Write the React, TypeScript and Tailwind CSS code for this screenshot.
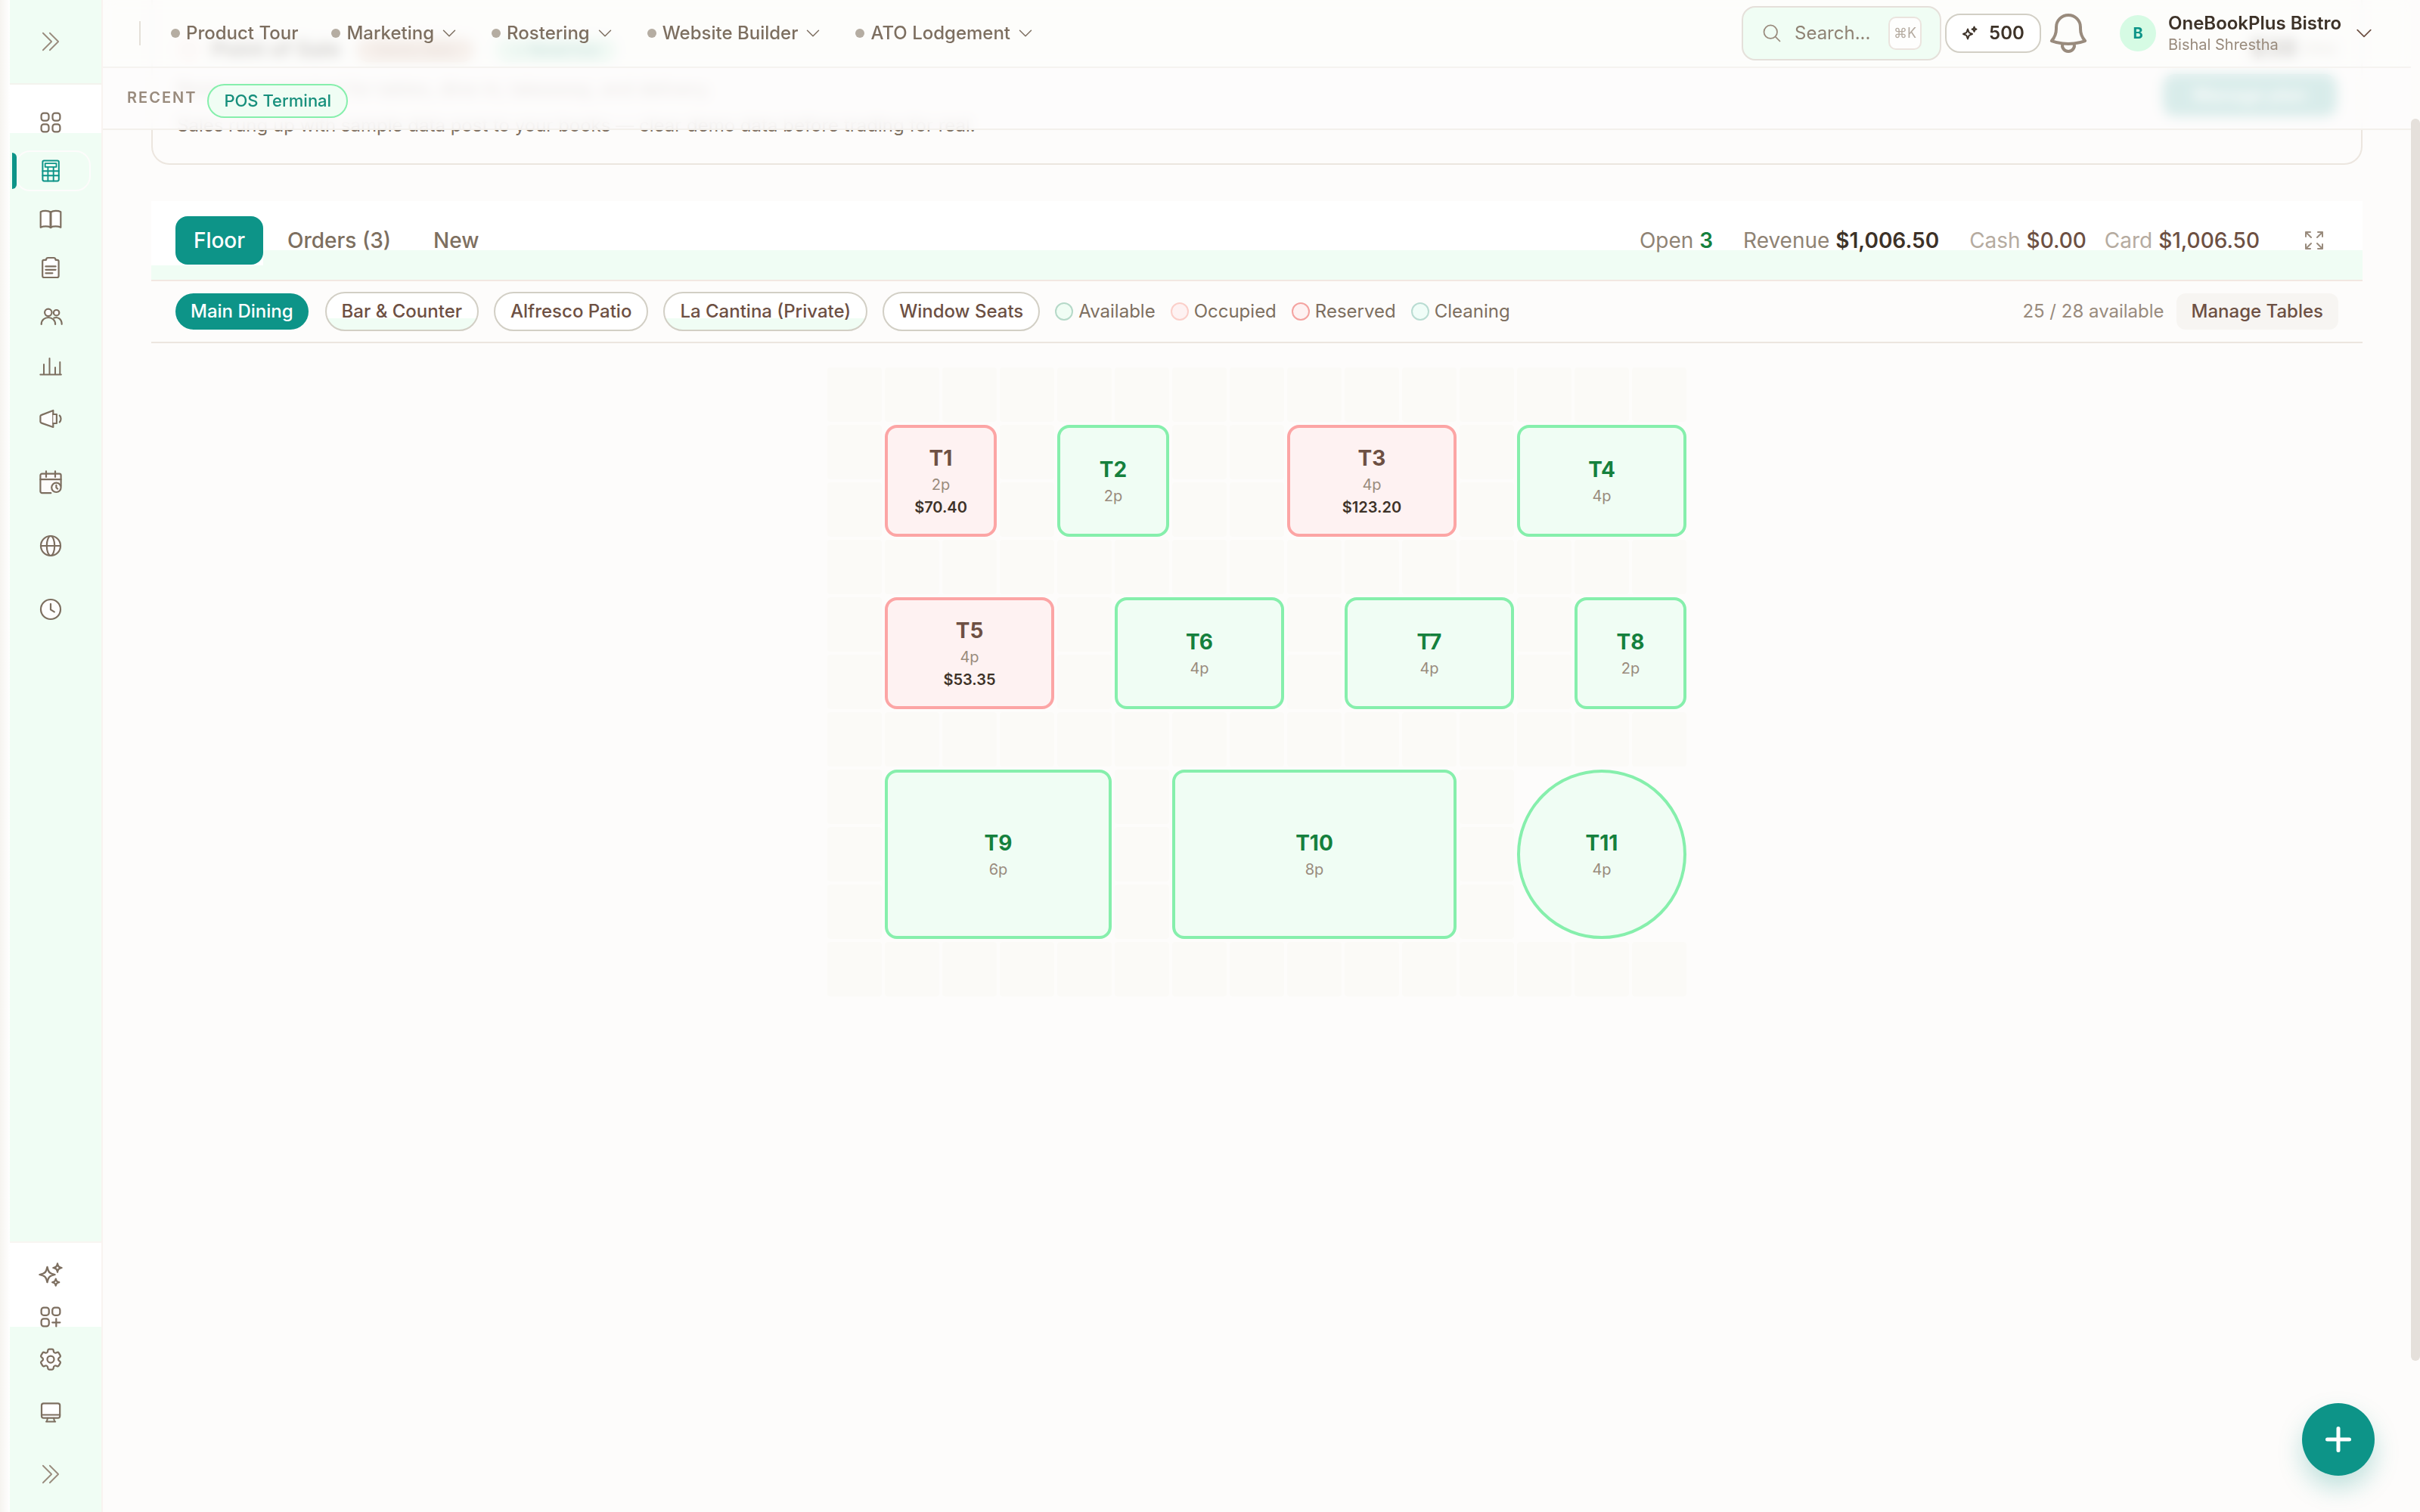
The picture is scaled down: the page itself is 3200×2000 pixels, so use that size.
import type { ReactNode } from 'react';
import {
  HiOutlineArrowsPointingOut,
  HiOutlineBell,
  HiOutlineChevronDoubleRight,
  HiOutlineChevronDown,
  HiOutlineCog6Tooth,
  HiOutlineMagnifyingGlass,
  HiOutlineSparkles,
  HiOutlineSquaresPlus,
} from 'react-icons/hi2';

type TableStatus = 'available' | 'occupied';

interface FloorTable {
  name: string;
  seats: number;
  col: number;
  row: number;
  w: number;
  h: number;
  status: TableStatus;
  total?: string;
  round?: boolean;
}

const COLS = 15;
const ROWS = 11;

const tables: FloorTable[] = [
  { name: 'T1', seats: 2, col: 1, row: 1, w: 2, h: 2, status: 'occupied', total: '$70.40' },
  { name: 'T2', seats: 2, col: 4, row: 1, w: 2, h: 2, status: 'available' },
  { name: 'T3', seats: 4, col: 8, row: 1, w: 3, h: 2, status: 'occupied', total: '$123.20' },
  { name: 'T4', seats: 4, col: 12, row: 1, w: 3, h: 2, status: 'available' },
  { name: 'T5', seats: 4, col: 1, row: 4, w: 3, h: 2, status: 'occupied', total: '$53.35' },
  { name: 'T6', seats: 4, col: 5, row: 4, w: 3, h: 2, status: 'available' },
  { name: 'T7', seats: 4, col: 9, row: 4, w: 3, h: 2, status: 'available' },
  { name: 'T8', seats: 2, col: 13, row: 4, w: 2, h: 2, status: 'available' },
  { name: 'T9', seats: 6, col: 1, row: 7, w: 4, h: 3, status: 'available' },
  { name: 'T10', seats: 8, col: 6, row: 7, w: 5, h: 3, status: 'available' },
  { name: 'T11', seats: 4, col: 12, row: 7, w: 3, h: 3, status: 'available', round: true },
];

const menuItems = [
  { label: 'Product Tour', menu: false },
  { label: 'Marketing', menu: true },
  { label: 'Rostering', menu: true },
  { label: 'Website Builder', menu: true },
  { label: 'ATO Lodgement', menu: true },
];

const areas = [
  { label: 'Bar & Counter', tinted: true },
  { label: 'Alfresco Patio', tinted: false },
  { label: 'La Cantina (Private)', tinted: true },
  { label: 'Window Seats', tinted: false },
];

const legend = [
  { label: 'Available', dot: 'bg-[#f0fdf4] border-[#b5d9c8]' },
  { label: 'Occupied', dot: 'bg-[#fef2f2] border-[#fbcfc9]' },
  { label: 'Reserved', dot: 'bg-[#fef2f2] border-[#f4a3a0]' },
  { label: 'Cleaning', dot: 'bg-[#f0fdf8] border-[#b9dcd2]' },
];

function Icon({ children, className = '' }: { children: ReactNode; className?: string }) {
  return (
    <svg
      viewBox="0 0 36 36"
      className={`size-9 ${className}`}
      fill="none"
      stroke="currentColor"
      strokeWidth="2.2"
      strokeLinecap="round"
      strokeLinejoin="round"
    >
      {children}
    </svg>
  );
}

const navIcons: { id: string; space: string; active?: boolean; icon: ReactNode }[] = [
  {
    id: 'dashboard',
    space: '',
    icon: (
      <Icon>
        <rect x="5.6" y="5.6" width="9.9" height="10" rx="3.3" />
        <rect x="20.5" y="5.6" width="9.9" height="10" rx="3.3" />
        <rect x="5.6" y="20.4" width="9.9" height="10" rx="3.3" />
        <rect x="20.5" y="20.4" width="9.9" height="10" rx="3.3" />
      </Icon>
    ),
  },
  {
    id: 'pos',
    space: '',
    active: true,
    icon: (
      <Icon>
        <rect x="7.4" y="4.4" width="21.4" height="27" rx="1.8" strokeWidth="2" />
        <rect x="10.7" y="8.2" width="14.8" height="4.6" strokeWidth="1.8" />
        <path d="M7.4 18.2h21.4M7.4 24.3h21.4M14.4 13v18.4M21.7 13v18.4" strokeWidth="1.9" />
      </Icon>
    ),
  },
  {
    id: 'books',
    space: '',
    icon: (
      <Icon>
        <path
          d="M18 8.6C14.6 6.4 8.4 6.4 4.7 8.2v20.6c3.7-1.8 9.9-1.8 13.3 0 3.4-1.8 9.6-1.8 13.3 0V8.2C27.6 6.4 21.4 6.4 18 8.6Z"
          fill="#fff"
        />
        <path d="M18 8.6v20.2" strokeWidth="3" />
      </Icon>
    ),
  },
  {
    id: 'orders',
    space: '',
    icon: (
      <Icon>
        <path
          d="M12 7.8H9.2A2 2 0 0 0 7.2 9.8V29A2 2 0 0 0 9.2 31H26.6A2 2 0 0 0 28.6 29V9.8A2 2 0 0 0 26.6 7.8H24.5C24.5 6 23.6 5 22 5H14.5C13 5 12 6 12 7.8Z"
          fill="#fff"
        />
        <path d="M11.4 16.4h13.2M11.4 20.8h13.2M11.4 25.3h9" />
      </Icon>
    ),
  },
  {
    id: 'staff',
    space: 'mt-px',
    icon: (
      <Icon>
        <circle cx="25.6" cy="12.7" r="3.7" fill="#fff" />
        <path d="M22.4 19.6c5-2 10.3 1.4 10.3 8.2" />
        <circle cx="14.8" cy="12.3" r="4.7" fill="#fff" />
        <path d="M5.7 28c0-12 18.4-12 18.4 0" />
      </Icon>
    ),
  },
  {
    id: 'reports',
    space: 'mt-0.5',
    icon: (
      <Icon>
        <path d="M4.3 28.6h27.6M9 28.3V15M16.5 28.3V7M24 28.3V19M30.3 28.3V12" strokeWidth="2" />
      </Icon>
    ),
  },
  {
    id: 'campaigns',
    space: 'mt-[5px]',
    icon: (
      <Icon>
        <path d="M4.4 14.6C4.4 13.6 5 13.2 6 12.9L21.3 7v22L6 23.6c-1-.3-1.6-.8-1.6-1.8Z" fill="#fefefd" />
        <path d="M21.3 12h4.6v12h-4.6" fill="#fefefd" />
        <path d="M29.8 13.6c2.3 2.2 2.3 6.6 0 8.8" />
      </Icon>
    ),
  },
  {
    id: 'roster',
    space: 'mt-5',
    icon: (
      <Icon>
        <path
          d="M18.3 32.2H6.6a2.2 2.2 0 0 1-2.2-2.2V8.8a2.2 2.2 0 0 1 2.2-2.2h22.8a2.2 2.2 0 0 1 2.2 2.2V23"
          fill="#fdfcfb"
        />
        <path d="M4.4 14.2h27.2M12 3.3v7.6M24 3.3v7.6" />
        <circle cx="25.4" cy="24.8" r="6.2" fill="#fdfcfb" />
        <path d="M25.4 21.8v3.2l1.8 1.6" />
      </Icon>
    ),
  },
  {
    id: 'website',
    space: 'mt-5',
    icon: (
      <Icon>
        <circle cx="18" cy="18" r="13" fill="#fefefd" />
        <ellipse cx="18" cy="18" rx="5.2" ry="13" />
        <path d="M5 18h26" />
      </Icon>
    ),
  },
  {
    id: 'timesheets',
    space: 'mt-5',
    icon: (
      <Icon>
        <circle cx="18" cy="18" r="13" fill="#fefefd" />
        <path d="M18 10.8V18.4L22.8 21.4" />
      </Icon>
    ),
  },
];

function Sidebar() {
  return (
    <aside className="relative z-10 flex w-[136px] shrink-0 flex-col border-r-2 border-[#f9f3f0] text-[#7d6f60]">
      <div className="flex h-28 items-center justify-center border-b-2 border-[#f3f3ee] bg-[#f0fdf4] text-[#998b7d]">
        <HiOutlineChevronDoubleRight className="size-9" strokeWidth={1.2} />
      </div>
      <nav className="flex flex-1 flex-col bg-[linear-gradient(#fff_64px,#f0fdf4_64px)] pt-[18px]">
        {navIcons.map((item) => (
          <div
            key={item.id}
            className={`relative flex h-16 items-center justify-center ${item.space} ${item.active ? 'text-[#0d9488]' : ''}`}
          >
            {item.active && (
              <>
                <span className="absolute left-5 top-[5px] h-[54px] w-[100px] rounded-[20px] border-2 border-[#fdfcfb]" />
                <span className="absolute left-4 top-2 z-10 h-12 w-1.5 rounded-r-md bg-[#0d9488]" />
              </>
            )}
            {item.icon}
          </div>
        ))}
      </nav>
      <div className="flex h-[358px] flex-col border-t-2 border-[#f8f5f1] bg-[linear-gradient(#fff_111px,#f0fdf4_111px)] pt-3.5">
        <div className="flex h-14 items-center justify-center">
          <HiOutlineSparkles className="size-9" />
        </div>
        <div className="flex h-14 items-center justify-center">
          <HiOutlineSquaresPlus className="size-9" />
        </div>
        <div className="flex h-14 items-center justify-center">
          <HiOutlineCog6Tooth className="size-9" fill="#fefefd" />
        </div>
        <div className="mt-3.5 flex h-14 items-center justify-center">
          <Icon>
            <rect x="6" y="6.4" width="24.2" height="19.2" rx="2.6" fill="#fff" />
            <path d="M6 21.4h24.2" strokeWidth="2" />
            <path d="M14 25.8l-1.2 4.6h10.4l-1.2-4.6M12 30.6h12.2" strokeWidth="2" />
          </Icon>
        </div>
        <div className="mt-[26px] flex h-14 items-center justify-center text-[#998b7d]">
          <HiOutlineChevronDoubleRight className="size-9" strokeWidth={1.2} />
        </div>
      </div>
      <div className="absolute inset-y-0 left-0 w-[13px] bg-linear-to-r from-[#f6f4f0] to-white" />
    </aside>
  );
}

function TopBar() {
  return (
    <header className="flex h-[90px] items-center border-b-2 border-[#f5f3f0] bg-[#fdfcfb]/80 pl-12 backdrop-blur-sm">
      <div className="h-8 w-0.5 bg-[#e5e0d9]" />
      <nav className="ml-10 flex items-center gap-11 text-2xl font-medium text-[#7d6f60]">
        {menuItems.map((item) => (
          <div key={item.label} className="flex items-center">
            <span className="mr-2 size-3 rounded-full bg-[#b5ada2]" />
            {item.label}
            {item.menu && <HiOutlineChevronDown className="ml-2 size-6" />}
          </div>
        ))}
      </nav>
      <div className="ml-auto flex items-center">
        <div className="flex h-[72px] w-[264px] items-center rounded-[18px] border-2 border-[#e5e0da] bg-[#f0fdf4] pl-6 pr-6">
          <HiOutlineMagnifyingGlass className="size-7 text-[#998b7d]" />
          <span className="ml-4 text-2xl text-[#8f8374]">Search...</span>
          <kbd className="ml-auto flex size-11 items-center justify-center rounded-[10px] border-2 border-[#ebe4de] bg-[#fefefd] font-[Inter] text-lg text-[#b5aba0]">
            ⌘K
          </kbd>
        </div>
        <button className="ml-[5px] flex h-[52px] w-[127px] items-center justify-center gap-3.5 rounded-[20px] border-2 border-[#d2cfc5] bg-white text-2xl font-semibold text-[#3d3228]">
          <svg viewBox="0 0 22 22" className="size-[22px]" fill="none" stroke="currentColor" strokeWidth="2" strokeLinejoin="round">
            <path d="M8 5.5l1.7 4.6L14 12l-4.3 1.9L8 18.5l-1.7-4.6L2 12l4.3-1.9Z" />
            <path d="M16.5 2.5l.9 2.3 2.1.9-2.1.9-.9 2.3-.9-2.3-2.1-.9 2.1-.9Z" />
          </svg>
          500
        </button>
        <HiOutlineBell className="ml-1 size-16 text-[#998b7d]" />
        <div className="ml-9 flex size-12 items-center justify-center rounded-full bg-[#d6fbe4] text-xl font-bold text-[#0d9488]">
          B
        </div>
        <div className="ml-4 w-[230px]">
          <div className="text-2xl leading-[30px] font-semibold text-[#3d3228]">OneBookPlus Bistro</div>
          <div className="text-xl leading-[26px] text-[#998b7d]">Bishal Shrestha</div>
        </div>
        <HiOutlineChevronDown className="ml-[15px] mr-12 size-7 text-[#6d5043]" />
      </div>
    </header>
  );
}

function RecentBar() {
  return (
    <div className="flex h-[82px] items-center border-b-2 border-[#f3f0ec] bg-[#fdfcfb]/85 pl-8 backdrop-blur-sm">
      <span className="-mt-0.5 text-xl font-semibold tracking-[2px] text-[#998b7d]">RECENT</span>
      <span className="ml-3.5 mt-1.5 flex h-[45px] items-center rounded-full border-2 border-[#86efac] bg-[#f0fdf4] px-5 text-[22px] font-medium text-[#178f7c]">
        POS Terminal
      </span>
    </div>
  );
}

function IntroCard() {
  return (
    <section className="flex h-[218px] justify-between rounded-b-3xl border-2 border-t-0 border-[#ece6df] px-8 pt-[44px]">
      <div className="flex flex-col text-2xl text-[#7d6f60]">
        <div className="flex h-11 items-center">
          <span className="size-8 rounded-full bg-[#fbe6e6]" />
          <span className="ml-3.5 text-[28px] font-bold text-[#2b2118]">Point of Sale</span>
          <span className="ml-5 flex h-8 w-[156px] items-center justify-center rounded-full bg-[#dcbcab] text-xl text-[#8a5c4a]">
            Demo data
          </span>
          <span className="ml-7 flex h-8 w-[160px] items-center justify-center rounded-full bg-[#c0ecd6] text-xl font-semibold text-[#0d7a70]">
            ✓ Retail live
          </span>
        </div>
        <p className="mt-3 h-9 leading-9">Restaurant terminal for tables, dine-in, takeaway, and delivery.</p>
        <p className="mt-3 h-9 leading-9">
          Sales rung up with sample data post to your books — clear demo data before trading for real.
        </p>
      </div>
      <div className="flex flex-col items-end pt-0.5">
        <div className="flex h-9 items-center gap-2 text-2xl text-[#998b7d]">
          <b className="text-[32px] text-[#2b2118]">$38</b>/mo
        </div>
        <div className="mt-4 flex h-14 w-[230px] items-center justify-center rounded-2xl bg-[#0d9488] text-2xl font-semibold text-white">
          Manage plan
        </div>
      </div>
    </section>
  );
}

function Toolbar() {
  return (
    <div className="mt-12 flex h-[106px] items-center border-b-2 border-[#f2e8e2] bg-[linear-gradient(#fff_65px,#f0fdf4_65px)] text-[28px]">
      <div className="flex h-full w-[148px] items-center bg-[linear-gradient(#fff_85px,#f0fdf4_85px)] pl-8">
        <button className="h-16 w-full rounded-2xl bg-[#0d9488] font-medium text-white">Floor</button>
      </div>
      <button className="ml-2 h-16 px-6 font-medium text-[#7d6f60]">Orders (3)</button>
      <button className="ml-2 h-16 px-6 font-medium text-[#7d6f60]">New</button>
      <div className="ml-auto flex items-center gap-10 pr-8 text-[#8f8374]">
        <span>
          Open <b className="font-semibold text-[#15803d]">3</b>
        </span>
        <span>
          Revenue <b className="font-semibold text-[#3d3228]">$1,006.50</b>
        </span>
        <span className="flex gap-6 text-[#b5aba0]">
          <span>
            Cash <span className="font-medium text-[#6d5043]">$0.00</span>
          </span>
          <span>
            Card <span className="font-medium text-[#6d5043]">$1,006.50</span>
          </span>
        </span>
        <button className="p-4">
          <HiOutlineArrowsPointingOut className="size-8 text-[#998b7d]" />
        </button>
      </div>
    </div>
  );
}

function AreaBar() {
  return (
    <div className="flex h-[82px] items-center gap-5 border-b-2 border-[#ece6df] px-8 text-2xl">
      <button className="mr-0.5 h-12 rounded-full bg-[#0d9488] px-5 font-medium text-white">Main Dining</button>
      {areas.map((area) => (
        <button
          key={area.label}
          className={`h-[52px] rounded-full border-2 border-[#d2cfc5] px-5 font-medium text-[#6d5043] ${
            area.tinted ? 'bg-[linear-gradient(#fff_33px,#f0fdf4_33px)]' : 'bg-white'
          }`}
        >
          {area.label}
        </button>
      ))}
      {legend.map((item) => (
        <span key={item.label} className="flex items-center gap-[7px] text-[#7d6f60]">
          <span className={`size-6 rounded-full border-2 ${item.dot}`} />
          {item.label}
        </span>
      ))}
      <span className="ml-auto text-[#998b7d]">25 / 28 available</span>
      <button className="-ml-1 h-12 rounded-xl bg-[#f7f5f2] px-5 font-medium text-[#6d5043]">Manage Tables</button>
    </div>
  );
}

function isCovered(col: number, row: number) {
  return tables.some((t) => col >= t.col && col < t.col + t.w && row >= t.row && row < t.row + t.h);
}

function FloorPlan() {
  const cells = Array.from({ length: COLS * ROWS }, (_, i) => ({ col: i % COLS, row: Math.floor(i / COLS) })).filter(
    (c) => !isCovered(c.col, c.row)
  );

  return (
    <div className="mx-auto mt-8 grid w-[1136px] grid-cols-[repeat(15,72px)] grid-rows-[repeat(11,72px)] gap-1">
      {cells.map((c) => (
        <div
          key={`${c.col}-${c.row}`}
          className="rounded bg-[#fbfaf7]"
          style={{ gridColumn: c.col + 1, gridRow: c.row + 1 }}
        />
      ))}
      {tables.map((t) => (
        <button
          key={t.name}
          className={`flex flex-col items-center justify-center border-4 ${t.round ? 'rounded-full' : 'rounded-2xl'} ${
            t.status === 'occupied' ? 'border-[#fca5a5] bg-[#fef2f2]' : 'border-[#86efac] bg-[#f0fdf4]'
          }`}
          style={{ gridColumn: `${t.col + 1} / span ${t.w}`, gridRow: `${t.row + 1} / span ${t.h}` }}
        >
          <span
            className={`text-[28px] leading-10 font-bold ${t.status === 'occupied' ? 'text-[#6d5043]' : 'text-[#15803d]'}`}
          >
            {t.name}
          </span>
          <span className="text-xl leading-[30px] text-[#998b7d]">{t.seats}p</span>
          {t.total && <span className="text-xl leading-[30px] font-semibold text-[#3d3228]">{t.total}</span>}
        </button>
      ))}
    </div>
  );
}

export default function App() {
  return (
    <div className="flex h-[2000px] w-[3200px] overflow-hidden bg-[#fdfcfb] font-[Inter,sans-serif]">
      <Sidebar />
      <main className="relative min-w-0 flex-1 pl-16 pr-[76px]">
        <IntroCard />
        <Toolbar />
        <AreaBar />
        <FloorPlan />

        {/* sticky chrome over the scrolled page */}
        <div className="absolute left-0 right-3 top-0">
          <TopBar />
          <RecentBar />
        </div>
        <div className="absolute right-0 top-[157px] h-[1643px] w-3 rounded-full bg-[#e5e0db]" />
        <button className="absolute bottom-12 right-[60px] flex size-24 items-center justify-center rounded-full bg-[#0d9488] shadow-[0_16px_32px_rgba(13,148,136,0.25)]">
          <svg viewBox="0 0 48 48" className="size-12" stroke="#fff" strokeWidth="5" strokeLinecap="round">
            <path d="M24 9.5v29M9.5 24h29" />
          </svg>
        </button>
      </main>
    </div>
  );
}
